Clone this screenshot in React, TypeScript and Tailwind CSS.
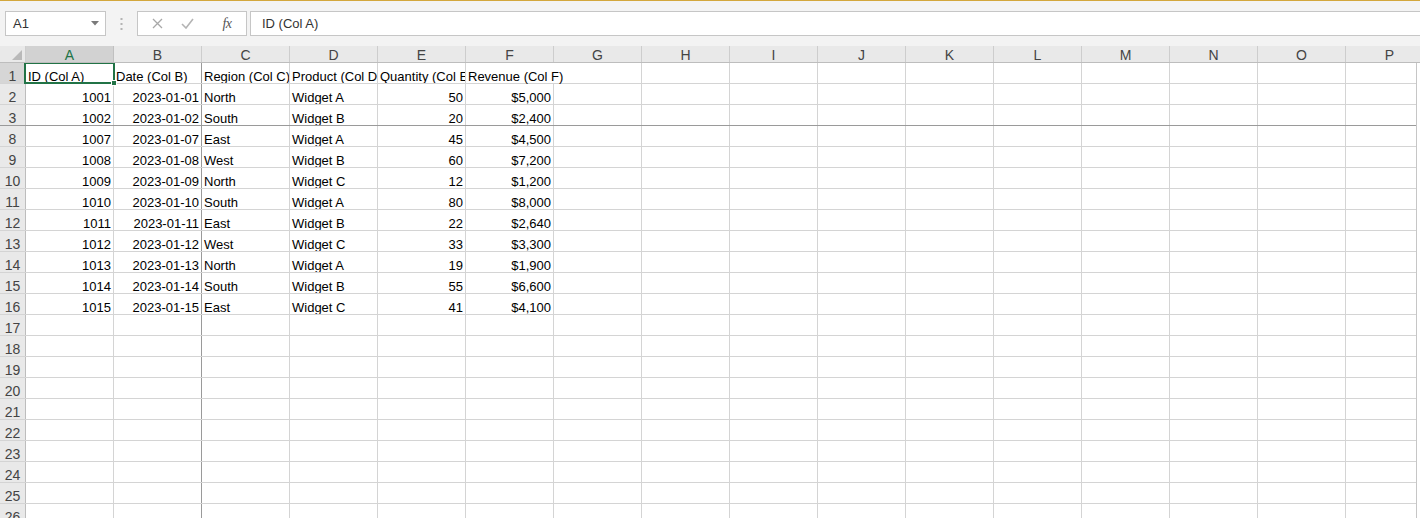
import React from "react";

type Cell = string | number;

const COLS = ["A", "B", "C", "D", "E", "F", "G", "H", "I", "J", "K", "L", "M", "N", "O", "P"];

const ROWS: { n: number; cells: Cell[] }[] = [
  { n: 1, cells: ["ID (Col A)", "Date (Col B)", "Region (Col C)", "Product (Col D)", "Quantity (Col E)", "Revenue (Col F)"] },
  { n: 2, cells: [1001, "2023-01-01", "North", "Widget A", 50, "$5,000"] },
  { n: 3, cells: [1002, "2023-01-02", "South", "Widget B", 20, "$2,400"] },
  { n: 8, cells: [1007, "2023-01-07", "East", "Widget A", 45, "$4,500"] },
  { n: 9, cells: [1008, "2023-01-08", "West", "Widget B", 60, "$7,200"] },
  { n: 10, cells: [1009, "2023-01-09", "North", "Widget C", 12, "$1,200"] },
  { n: 11, cells: [1010, "2023-01-10", "South", "Widget A", 80, "$8,000"] },
  { n: 12, cells: [1011, "2023-01-11", "East", "Widget B", 22, "$2,640"] },
  { n: 13, cells: [1012, "2023-01-12", "West", "Widget C", 33, "$3,300"] },
  { n: 14, cells: [1013, "2023-01-13", "North", "Widget A", 19, "$1,900"] },
  { n: 15, cells: [1014, "2023-01-14", "South", "Widget B", 55, "$6,600"] },
  { n: 16, cells: [1015, "2023-01-15", "East", "Widget C", 41, "$4,100"] },
  ...[17, 18, 19, 20, 21, 22, 23, 24, 25, 26].map((n) => ({ n, cells: [] as Cell[] })),
];

// columns whose data is right aligned (numbers, dates, money)
const RIGHT = [0, 1, 4, 5];

function FormulaBar() {
  return (
    <div className="h-[45px] bg-[#f3f3f3] flex items-start pt-[10px] pl-[5px]">
      {/* Name box */}
      <div className="w-[101px] h-[25px] bg-white border border-[#c6c6c6] flex items-center justify-between pl-[7px] pr-[6px]">
        <span className="text-[13px] text-[#333]">A1</span>
        <svg width="8" height="5" viewBox="0 0 8 5">
          <path d="M0 0 L8 0 L4 4.5 Z" fill="#7a7a7a" />
        </svg>
      </div>

      {/* splitter dots */}
      <div className="w-[31px] h-[25px] flex items-center justify-center">
        <svg width="3" height="12" viewBox="0 0 3 12">
          <rect x="0.5" y="0" width="2" height="2" fill="#b4b4b4" />
          <rect x="0.5" y="5" width="2" height="2" fill="#b4b4b4" />
          <rect x="0.5" y="10" width="2" height="2" fill="#b4b4b4" />
        </svg>
      </div>

      {/* cancel / enter / fx */}
      <div className="w-[110px] h-[25px] bg-white border border-[#c6c6c6] flex items-center">
        <div className="w-[36px] flex justify-center pl-[2px]">
          <svg width="11" height="11" viewBox="0 0 11 11">
            <path d="M1 1 L10 10 M10 1 L1 10" stroke="#a8a8a8" strokeWidth="1.3" />
          </svg>
        </div>
        <div className="w-[26px] flex justify-center">
          <svg width="13" height="11" viewBox="0 0 13 11">
            <path d="M1 6 L5 10 L12 1" stroke="#b4b4b4" strokeWidth="1.6" fill="none" />
          </svg>
        </div>
        <div className="flex-1 flex justify-center pl-[8px]">
          <span className="font-['Liberation_Serif',serif] italic text-[14px] text-[#555] tracking-[-0.5px]">fx</span>
        </div>
      </div>

      {/* formula input */}
      <div className="ml-[3px] flex-1 h-[25px] bg-white border border-[#c6c6c6] border-r-0 flex items-center pl-[11px]">
        <span className="text-[13px] text-[#333]">ID (Col A)</span>
      </div>
    </div>
  );
}

function ColumnHeaders() {
  return (
    <div className="h-[17px] flex bg-[#e9e9e9] border-b border-[#bdbdbd] overflow-hidden">
      <div className="w-[26px] shrink-0 border-r border-[#cdcdcd] relative">
        <svg className="absolute right-[3px] bottom-[2px]" width="10" height="10" viewBox="0 0 10 10">
          <path d="M10 0 L10 10 L0 10 Z" fill="#b9b9b9" />
        </svg>
      </div>
      {COLS.map((c, i) => (
        <div
          key={c}
          className={`w-[88px] shrink-0 border-r text-center text-[14px] leading-[18px] ${
            i === 0 ? "bg-[#d2d2d2] text-[#217346] border-[#c0c0c0]" : "text-[#444] border-[#cdcdcd]"
          }`}
        >
          {c}
        </div>
      ))}
    </div>
  );
}

function Row({ n, cells }: { n: number; cells: Cell[] }) {
  const isHeader = n === 1;
  const frozenBelow = n === 3;
  return (
    <div className={`h-[21px] flex border-b ${frozenBelow ? "border-[#9a9a9a]" : "border-[#d4d4d4]"}`}>
      <div
        className={`w-[26px] shrink-0 border-r border-[#bdbdbd] text-center text-[14px] text-[#444] leading-[27px] overflow-hidden ${
          isHeader ? "bg-[#d6d6d6]" : "bg-[#e9e9e9]"
        }`}
      >
        {n}
      </div>
      {COLS.map((c, i) => {
        const value = cells[i];
        const right = !isHeader && RIGHT.includes(i);
        const selected = isHeader && i === 0;
        const overflowRight = isHeader && i === 5;
        const frozenCol = i === 1;
        return (
          <div
            key={c}
            className={`w-[88px] shrink-0 border-r relative whitespace-nowrap text-[13px] text-black leading-[27px] px-[2px] ${
              frozenCol ? "border-[#9a9a9a]" : overflowRight ? "border-transparent" : "border-[#d4d4d4]"
            } ${overflowRight || selected ? "overflow-visible" : "overflow-hidden"} ${right ? "text-right" : "text-left"}`}
          >
            <div className="h-[20px] overflow-visible">{value}</div>
            {selected && (
              <div className="absolute z-10 -left-[2px] -top-[1px] w-[91px] h-[22px] border-2 border-[#217346]">
                <div className="absolute -right-[4px] -bottom-[4px] w-[6px] h-[6px] bg-[#217346] border border-white" />
              </div>
            )}
          </div>
        );
      })}
    </div>
  );
}

export default function App() {
  return (
    <div className="w-[1420px] h-[518px] overflow-hidden bg-white font-['Liberation_Sans',Arial,sans-serif]">
      <div className="h-[1px] bg-[#d3a73c]" />
      <FormulaBar />
      <ColumnHeaders />
      <div className="w-[1417px] border-r border-[#c6c6c6] overflow-hidden">
        {ROWS.map((r) => (
          <Row key={r.n} n={r.n} cells={r.cells} />
        ))}
      </div>
    </div>
  );
}
